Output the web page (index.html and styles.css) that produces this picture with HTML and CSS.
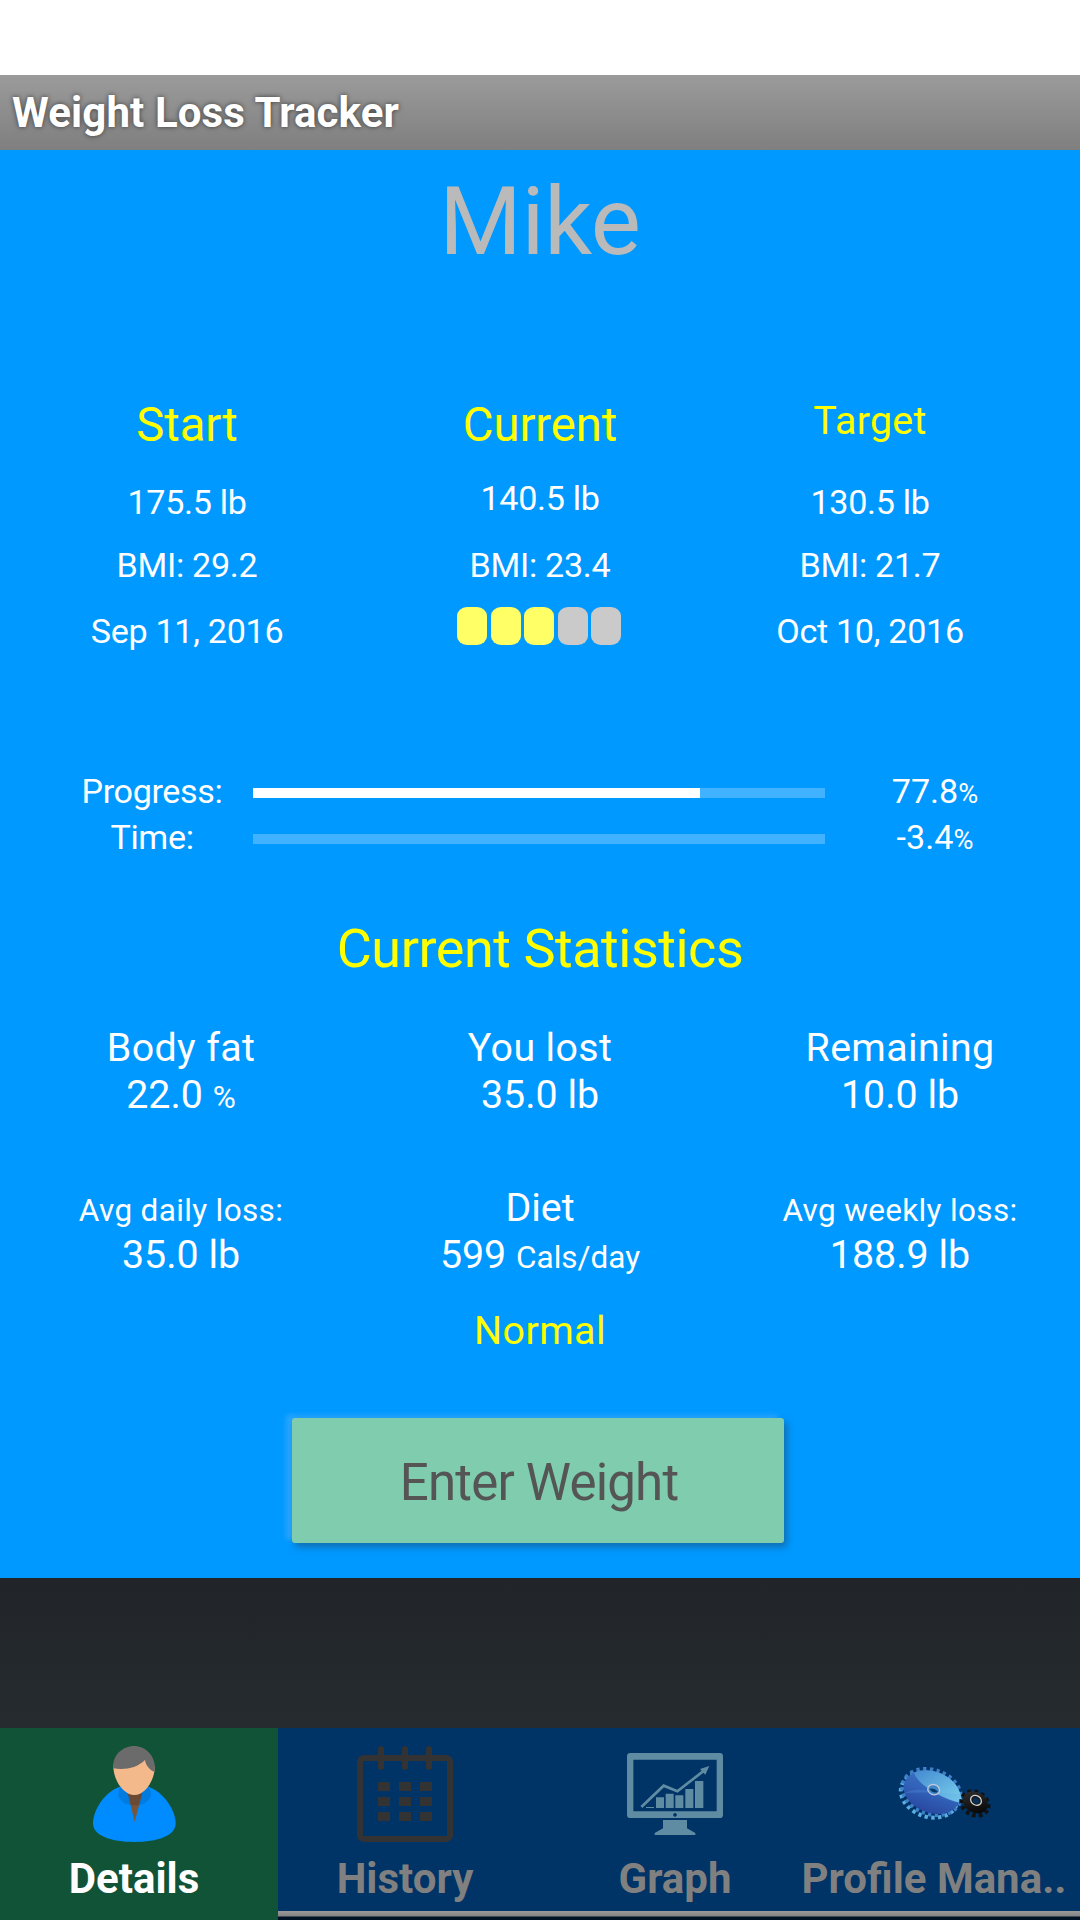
FILE: index.html
```html
<!DOCTYPE html>
<html lang="en">

<head>
	<meta charset="UTF-8">
	<meta name="viewport" content="width=device-width, initial-scale=1.0">
	<title>Weight Loss Tracker</title>

	<link rel="stylesheet" href="styles.css">
</head>

<body>

	<header class="title-bar">Weight Loss Tracker</header>

	<main class="panel">
		<h1 class="name">Mike</h1>

		<section class="summary">
			<div class="summary-col">
				<h2 class="col-title">Start</h2>
				<p class="weight">175.5 lb</p>
				<p class="bmi">BMI: 29.2</p>
				<p class="date">Sep 11, 2016</p>
			</div>
			<div class="summary-col current">
				<h2 class="col-title">Current</h2>
				<p class="weight">140.5 lb</p>
				<p class="bmi">BMI: 23.4</p>
				<div class="rating">
					<span class="block on"></span>
					<span class="block on"></span>
					<span class="block on"></span>
					<span class="block"></span>
					<span class="block"></span>
				</div>
			</div>
			<div class="summary-col target">
				<h2 class="col-title">Target</h2>
				<p class="weight">130.5 lb</p>
				<p class="bmi">BMI: 21.7</p>
				<p class="date">Oct 10, 2016</p>
			</div>
		</section>

		<section class="progress">
			<div class="progress-row">
				<span class="progress-label">Progress:</span>
				<div class="bar"><div class="bar-fill" style="width: 78.1%"></div></div>
				<span>77.8<small>%</small></span>
			</div>
			<div class="progress-row">
				<span class="progress-label">Time:</span>
				<div class="bar"></div>
				<span>-3.4<small>%</small></span>
			</div>
		</section>

		<h2 class="stats-title">Current Statistics</h2>

		<section class="stats">
			<div class="stat left">
				<p class="stat-label">Body fat</p>
				<p>22.0 <small>%</small></p>
			</div>
			<div class="stat">
				<p class="stat-label">You lost</p>
				<p>35.0 lb</p>
			</div>
			<div class="stat">
				<p class="stat-label">Remaining</p>
				<p>10.0 lb</p>
			</div>
			<div class="stat left">
				<p class="stat-label"><small>Avg daily loss:</small></p>
				<p>35.0 lb</p>
			</div>
			<div class="stat">
				<p>Diet</p>
				<p>599 <small>Cals/day</small></p>
			</div>
			<div class="stat">
				<p class="stat-label"><small>Avg weekly loss:</small></p>
				<p>188.9 lb</p>
			</div>
		</section>

		<p class="status">Normal</p>

		<button class="enter-btn">Enter Weight</button>
	</main>

	<nav class="tabs">
		<a class="tab active">
			<!-- person -->
			<svg class="tab-icon" viewBox="258 108 288 288">
				<path fill="#008cff" d="M360 230C318 242 279 298 279 340C279 378 334 396 403 396S527 378 527 340C527 298 486 242 445 230Z" />
				<path fill="#79553a" d="M383 248L404 336L427 248Z" />
				<path fill="#000" opacity=".12" d="M362 231C344 256 361 286 404 286S464 256 445 231Z" />
				<path fill="#f3b98b" d="M340 168C340 210 370 255 403 255S464 210 464 172C462 130 340 130 340 168Z" />
				<path fill="#6b6b6b" d="M340 175C336 136 368 108 402 108S471 138 464 186C448 179 437 166 435 150C410 175 374 180 340 175Z" />
			</svg>
			<span class="tab-label">Details</span>
		</a>
		<a class="tab history">
			<!-- calendar -->
			<svg class="tab-icon" viewBox="201 108 288 288">
				<rect x="210" y="144" width="270" height="243" rx="12" fill="none" stroke="#333" stroke-width="18" />
				<path stroke="#333" stroke-width="18" stroke-linecap="round" d="M273 117V171M345 117V171M417 117V171" />
				<path fill="#333" d="M264 216h36v27h-36zM327 216h36v27h-36zM390 216h36v27h-36zM264 261h36v27h-36zM327 261h36v27h-36zM390 261h36v27h-36zM264 306h36v27h-36zM327 306h36v27h-36zM390 306h36v27h-36z" />
			</svg>
			<span class="tab-label">History</span>
		</a>
		<a class="tab graph">
			<!-- monitor with chart -->
			<svg class="tab-icon" viewBox="201 108 288 288">
				<path fill="#5f8ca3" fill-rule="evenodd" d="M211 129H479Q489 129 489 139V314Q489 324 479 324H211Q201 324 201 314V139Q201 129 211 129ZM220 149V304H470V149ZM345 309a5.500 5.500 0 1 0 .1 0Z" />
				<path fill="#5f8ca3" d="M309 330H381V355L406 369V375H284V369L309 355ZM258 291h24v3h-24zM288 262h24v32h-24zM317 251h24v43h-24zM346 256h24v38h-24zM376 237h24v57h-24zM405 213h25v81h-25zM448 168L420 177L436 194Z" />
				<path fill="none" stroke="#5f8ca3" stroke-width="8" d="M244 291L311 227L352 244L433 181" />
			</svg>
			<span class="tab-label">Graph</span>
		</a>
		<a class="tab last">
			<!-- gears -->
			<svg class="tab-icon" viewBox="321 108 288 288">
				<defs>
					<linearGradient id="disc" x1="0" y1="0" x2="0" y2="1">
						<stop offset="0" stop-color="#3c72c4" />
						<stop offset=".5" stop-color="#3263ba" />
						<stop offset="1" stop-color="#2948a0" />
					</linearGradient>
					<linearGradient id="shine" x1="0" y1="0" x2="1" y2="1">
						<stop offset="0" stop-color="#4389d0" />
						<stop offset="1" stop-color="#7cd3ee" />
					</linearGradient>
					<linearGradient id="dark" x1="0" y1="0" x2="1" y2="1">
						<stop offset="0" stop-color="#333" />
						<stop offset="1" stop-color="#000" />
					</linearGradient>
				</defs>
				<g transform="rotate(20 424 248)">
					<ellipse cx="420" cy="257" rx="87" ry="65" fill="none" stroke="#5aaee0" stroke-width="12" stroke-dasharray="10 10" />
					<ellipse cx="424" cy="246" rx="90" ry="66" fill="none" stroke="#3d7fc9" stroke-width="12" stroke-dasharray="10 10" />
					<ellipse cx="425" cy="246" rx="87" ry="62" fill="url(#disc)" />
				</g>
				<path fill="url(#shine)" d="M371 188C415 169 475 190 500 228Q517 255 515 279Q480 273 444 253L418 237Q385 218 371 188Z" />
				<path fill="#5ca1e5" opacity=".25" d="M340 249Q385 230 440 248L515 252V278Q470 275 431 247Z" />
				<ellipse cx="431" cy="239" rx="18" ry="15" transform="rotate(20 431 239)" fill="#3e86c5" stroke="#c2c8de" stroke-width="4" />
				<path fill="#063b70" d="M418 237Q431 232 444 245Q430 253 418 237Z" />
				<g transform="rotate(28 556 278)">
					<ellipse cx="556" cy="281" rx="42" ry="34" fill="none" stroke="#101214" stroke-width="13" stroke-dasharray="11 9" />
					<ellipse cx="556" cy="277" rx="39" ry="31" fill="url(#dark)" />
				</g>
				<ellipse cx="558" cy="271" rx="17" ry="14" transform="rotate(32 558 271)" fill="#17191b" stroke="#d0d0d0" stroke-width="4" />
				<ellipse cx="558" cy="272" rx="10" ry="8" transform="rotate(32 558 272)" fill="#063058" />
			</svg>
			<span class="tab-label">Profile Mana..</span>
		</a>
	</nav>

</body>

</html>
```
FILE: styles.css
```css
* {
	padding: 0;
	margin: 0;
	box-sizing: border-box;
}

body {
	width: 1080px;
	height: 1920px;
	padding-top: 75px;
	background: linear-gradient(#fff 75px, #212529 75px, #212529 1578px, #252b2e 1728px);
	font-family: Roboto, "Noto Sans", sans-serif;
	color: white;
	overflow: hidden;
}

h1,
h2 {
	font-weight: normal;
}

.title-bar {
	height: 75px;
	padding-left: 12px;
	line-height: 75px;
	font-size: 42px;
	font-weight: bold;
	letter-spacing: 0.12px;
	background: linear-gradient(#9b9b9b, #7f7f7f);
	text-shadow: 0 0 5px rgba(0, 0, 0, 0.6);
}

.panel {
	height: 1428px;
	padding-top: 16px;
	background-color: #0099ff;
	text-align: center;
}

.name {
	height: 234px;
	line-height: 111px;
	font-size: 94.5px;
	letter-spacing: -0.3px;
	color: #bababa;
}

/* start / current / target */

.summary {
	display: grid;
	grid-template-columns: 374px 332px 328px;
	height: 368px;
	font-size: 34.125px;
	line-height: 40px;
	letter-spacing: -0.3px;
}

.col-title {
	font-size: 47.25px;
	line-height: 50px;
	letter-spacing: -0.1px;
	color: yellow;
}

.weight {
	margin-top: 32px;
}

.bmi {
	margin-top: 23px;
}

.date {
	margin-top: 26px;
}

.current .weight {
	margin-top: 28px;
}

.current .bmi {
	margin-top: 27px;
}

.target .col-title {
	font-size: 39.375px;
	line-height: 41px;
	letter-spacing: 0.3px;
}

.target .weight {
	margin-top: 41px;
}

.rating {
	display: flex;
	justify-content: center;
	gap: 3.5px;
	margin: 22px 2px 0 0;
}

.block {
	width: 30px;
	height: 38px;
	border-radius: 10px / 9px;
	background-color: #cacaca;
}

.block.on {
	background-color: #ffff66;
}

/* progress bars */

.progress {
	padding-left: 51px;
	font-size: 34.125px;
	line-height: 46px;
}

.progress-row {
	display: grid;
	grid-template-columns: 202px 572px 220px;
	height: 46px;
}

.progress-label {
	letter-spacing: -0.35px;
}

.progress small {
	font-size: 27.3px;
}

.bar {
	height: 10px;
	margin-top: 20px;
	background-color: #40b2ff;
}

.bar-fill {
	height: 100%;
	background-color: white;
}

.stats-title {
	margin-top: 59px;
	font-size: 54px;
	line-height: 60px;
	letter-spacing: -0.48px;
	color: yellow;
}

.stats {
	display: grid;
	grid-template-columns: repeat(3, 1fr);
	row-gap: 66px;
	margin-top: 45px;
	font-size: 39.375px;
	line-height: 47px;
}

.stats small {
	font-size: 31.5px;
}

.stat p {
	height: 47px;
}

.stat.left {
	padding-left: 2px;
}

.stat-label {
	letter-spacing: 0.35px;
}

.status {
	margin-top: 29px;
	font-size: 39.375px;
	line-height: 47px;
	letter-spacing: 0.4px;
	color: yellow;
}

.enter-btn {
	display: block;
	width: 492px;
	height: 125px;
	margin: 64px 0 0 291.5px;
	padding: 4px 0 0 3px;
	border: none;
	border-radius: 3px;
	background-color: #7fccae;
	box-shadow: 3px 4px 7px rgba(30, 80, 120, 0.6), -6px -3px 5px rgba(70, 175, 255, 0.6);
	font-family: inherit;
	font-size: 51px;
	letter-spacing: -0.8px;
	color: #555;
}

/* bottom tabs */

.tabs {
	display: flex;
	height: 192px;
	margin-top: 150px;
	background: linear-gradient(#003366 183px, #999 183px, #848484 188px, #001326 189px);
}

.tab {
	display: flex;
	flex-direction: column;
	flex-shrink: 0;
	align-items: center;
	width: 270px;
	padding-top: 18px;
	color: #808080;
}

.tab.active {
	width: 278px;
	padding-right: 10px;
	background-color: #115336;
	color: white;
}

.tab.history {
	width: 254px;
}

.tab.graph {
	width: 278px;
	padding-left: 8px;
}

.tab-icon {
	width: 96px;
	height: 96px;
}

.tab-label {
	margin-top: 12px;
	font-size: 42px;
	font-weight: bold;
	line-height: 50px;
	white-space: nowrap;
}

.last .tab-label {
	margin-right: 22px;
}
```
